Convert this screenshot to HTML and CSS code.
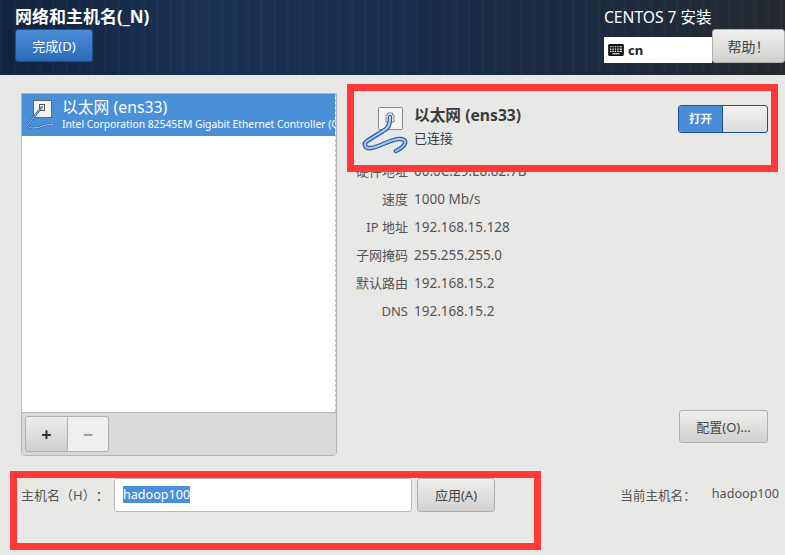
FILE: index.html
```html
<!DOCTYPE html>
<html lang="zh-CN">
<head>
    <meta charset="UTF-8">
    <meta name="viewport" content="width=device-width, initial-scale=1.0">
    <link rel="stylesheet" href="styles.css">
    <title>网络和主机名</title>
</head>
<body>
    <svg class="defs" width="0" height="0">
        <defs>
            <linearGradient id="cable" x1="0" y1="0" x2="0" y2="1">
                <stop offset="0" stop-color="#c4daf4"/>
                <stop offset="1" stop-color="#9dbde6"/>
            </linearGradient>
        </defs>
    </svg>

    <header class="topbar">
        <div class="topbar-left">
            <h1>网络和主机名(_N)</h1>
            <button class="done-btn">完成(D)</button>
        </div>
        <div class="topbar-right">
            <div class="product">CENTOS 7 安装</div>
            <div class="topbar-tools">
                <div class="keyboard">
                    <svg class="kbd-icon" width="16" height="12" viewBox="0 0 17 13">
                        <rect x="0" y="0" width="17" height="13" rx="1.5" fill="#111"/>
                        <path d="M2 3h1.5M4.6 3h1.5M7.2 3h1.5M9.8 3h1.5M12.4 3h2.5M2 5.5h1.5M4.6 5.5h1.5M7.2 5.5h1.5M9.8 5.5h1.5M12.4 5.5h2.5M2 8h1.5M4.6 8h1.5M7.2 8h1.5M9.8 8h1.5M12.4 8h2.5M4.6 10.5h7.8" stroke="#fff" stroke-width="1.2"/>
                    </svg>
                    <span>cn</span>
                </div>
                <button class="btn help-btn">帮助！</button>
            </div>
        </div>
    </header>

    <main class="content">
        <section class="device-panel">
            <div class="device-list">
                <div class="device-row">
                    <svg class="nic-icon" width="34" height="34" viewBox="0 0 34 34">
                        <rect x="7.5" y="2.5" width="18" height="17" fill="#f2f2f0" stroke="#666"/>
                        <rect x="13.5" y="6.5" width="5" height="6" fill="none" stroke="#555"/>
                        <path d="M16 9L3 25C0 29 3 30 8 30C14 30 20 26 26 26C28 26 28 27 25 28" fill="none" stroke="#2f5f9f" stroke-width="2.2" stroke-linecap="round"/>
                        <path d="M16 9L3 25C0 29 3 30 8 30C14 30 20 26 26 26C28 26 28 27 25 28" fill="none" stroke="#a9c8ee" stroke-width="1" stroke-linecap="round"/>
                    </svg>
                    <div class="device-text">
                        <div class="device-name">以太网 (ens33)</div>
                        <div class="device-desc">Intel Corporation 82545EM Gigabit Ethernet Controller (Copper)</div>
                    </div>
                </div>
            </div>
            <div class="device-toolbar">
                <div class="btn-group">
                    <button class="tool-btn">+</button>
                    <button class="tool-btn tool-off">−</button>
                </div>
            </div>
        </section>

        <section class="details">
            <div class="details-head">
                <svg class="nic-large" width="52" height="50" viewBox="0 0 52 50">
                    <rect x="17.5" y="3.5" width="24" height="22" rx="1" fill="#f4f4f2" stroke="#8a8a88"/>
                    <path d="M26.5 9h5v2h1.500v7h-8v-7h1.500z" fill="none" stroke="#888"/>
                    <path d="M29 13C29 20 28 24 22 27L6 37C2 40 4 45 10 44C20 43 30 34 40 35C47 36 45 42 35 47" fill="none" stroke="#2f62ad" stroke-width="4.600" stroke-linecap="round"/>
                    <path d="M29 13C29 20 28 24 22 27L6 37C2 40 4 45 10 44C20 43 30 34 40 35C47 36 45 42 35 47" fill="none" stroke="url(#cable)" stroke-width="2" stroke-linecap="round"/>
                </svg>
                <div class="details-title">
                    <div class="details-name">以太网 (ens33)</div>
                    <div class="details-status">已连接</div>
                </div>
                <div class="switch">
                    <span class="switch-on">打开</span>
                    <span class="switch-knob"></span>
                </div>
            </div>

            <dl class="info">
                <dt>硬件地址</dt><dd>00:0C:29:E8:82:7B</dd>
                <dt>速度</dt><dd>1000 Mb/s</dd>
                <dt>IP 地址</dt><dd>192.168.15.128</dd>
                <dt>子网掩码</dt><dd>255.255.255.0</dd>
                <dt>默认路由</dt><dd>192.168.15.2</dd>
                <dt>DNS</dt><dd>192.168.15.2</dd>
            </dl>

            <div class="config-row">
                <button class="btn config-btn">配置(O)...</button>
            </div>
        </section>

        <section class="hostname">
            <label class="hostname-label" for="hostInput">主机名（H）：</label>
            <div class="hostname-input" id="hostInput"><span class="selected">hadoop100</span></div>
            <button class="btn apply-btn">应用(A)</button>
            <div class="current-host">
                <span class="current-label">当前主机名：</span>
                <span>hadoop100</span>
            </div>
        </section>
    </main>

    <div class="mark mark-top"></div>
    <div class="mark mark-bottom"></div>
</body>
</html>
```

FILE: styles.css
```css
* {
    box-sizing: border-box;
}

body {
    font-family: "Noto Sans", "Noto Sans CJK SC", sans-serif;
    font-size: 13px;
    color: #3a3c3c;
    background-color: #e8e8e7;
    margin: 0;
    width: 785px;
    height: 555px;
    overflow: hidden;
    position: relative;
    text-spacing-trim: space-all;
}

button {
    font-family: inherit;
    margin: 0;
    text-spacing-trim: space-all;
}

.defs {
    position: absolute;
}

/* top bar */
.topbar {
    height: 75px;
    display: flex;
    justify-content: space-between;
    color: #fff;
    background:
        repeating-linear-gradient(90deg, rgba(255, 255, 255, 0.018) 0 3px, rgba(0, 0, 0, 0.03) 3px 7px, rgba(255, 255, 255, 0) 7px 13px),
        linear-gradient(90deg, #10233f 0%, #1a3253 25%, #182e4e 50%, #1d2b40 75%, #262a30 100%);
}

.topbar-left {
    padding: 7px 0 0 15px;
}

.topbar-left h1 {
    margin: 0 0 2px;
    font-size: 17px;
    line-height: 20px;
    font-weight: 700;
}

.done-btn {
    display: block;
    width: 78px;
    height: 33px;
    padding: 0;
    color: #fff;
    font-size: 13px;
    border: 1px solid #1d4f8c;
    border-radius: 3px;
    background: linear-gradient(#4a8cd8, #2a6cb8);
}

.topbar-right {
    width: 181px;
    padding-top: 7px;
}

.product {
    font-size: 15.6px;
    line-height: 20px;
    margin-bottom: 2px;
}

.topbar-tools {
    display: flex;
    align-items: flex-start;
}

.keyboard {
    width: 108px;
    height: 26px;
    margin-top: 8px;
    padding-left: 4px;
    display: flex;
    align-items: center;
    gap: 4px;
    color: #222;
    font-size: 13px;
    font-weight: 700;
    background-color: #fff;
}

.kbd-icon {
    flex: none;
}

.btn {
    height: 34px;
    padding: 0;
    color: #444;
    font-size: 13px;
    border: 1px solid #b0b0ae;
    border-radius: 3px;
    background: linear-gradient(#efefed, #d0d0ce);
}

.help-btn {
    width: 73px;
    font-size: 14px;
}

/* main area */
.content {
    display: grid;
    grid-template-columns: 316px 1fr;
    grid-template-rows: 363px auto;
    column-gap: 19px;
    padding: 18px 0 0 21px;
}

.device-panel {
    display: flex;
    flex-direction: column;
    border: 1px solid #b6b6b4;
    border-radius: 0 0 4px 4px;
    background-color: #fff;
    overflow: hidden;
}

.device-list {
    flex: 1;
    border-right: 1px dashed #c4c4c4;
}

.device-row {
    height: 42px;
    display: flex;
    align-items: center;
    padding-left: 4px;
    color: #fff;
    background-color: #4a90d9;
    overflow: hidden;
}

.nic-icon {
    flex: none;
    margin-right: 2px;
}

.device-text {
    min-width: 0;
}

.device-name {
    font-size: 15.8px;
    line-height: 19px;
    white-space: nowrap;
}

.device-desc {
    font-size: 10.3px;
    line-height: 15px;
    white-space: nowrap;
}

.device-toolbar {
    height: 43px;
    padding: 3px;
    background-color: #d9d9d7;
    border-top: 1px solid #b6b6b4;
}

.btn-group {
    display: flex;
    width: 84px;
    height: 36px;
}

.tool-btn {
    width: 43px;
    padding: 0;
    font-size: 18px;
    font-weight: 700;
    color: #2e3436;
    border: 1px solid #b0b0ae;
    border-radius: 3px 0 0 3px;
    background: linear-gradient(#ededeb, #cfcfcd);
}

.tool-off {
    width: 41px;
    color: #999;
    border-left: 0;
    border-radius: 0 3px 3px 0;
    background: #efeff0;
}

.details {
    display: flex;
    flex-direction: column;
    padding-right: 17px;
}

.details-head {
    height: 65px;
    padding-left: 12px;
    margin-top: -1px;
    display: flex;
    align-items: flex-start;
}

.nic-large {
    flex: none;
    margin: 12px 1px 0 -7px;
}

.details-title {
    flex: 1;
    padding-top: 12px;
}

.details-name {
    font-size: 15.7px;
    font-weight: 700;
    line-height: 22px;
}

.details-status {
    font-size: 13px;
    line-height: 24px;
}

.switch {
    width: 90px;
    height: 28px;
    margin-top: 13px;
    display: flex;
    border: 1px solid #1d4f8c;
    border-radius: 3px;
    overflow: hidden;
    background: linear-gradient(#f2f2f0, #dcdcda);
}

.switch-on {
    width: 44px;
    color: #fff;
    font-size: 11.5px;
    font-weight: 700;
    line-height: 26px;
    text-align: center;
    background-color: #4a8cd8;
    border-right: 1px solid #1d4f8c;
}

.switch-knob {
    flex: 1;
}

.info {
    margin: 0;
    display: grid;
    grid-template-columns: 52px 1fr;
    column-gap: 6px;
    grid-auto-rows: 28px;
    line-height: 28px;
    color: #555;
}

.info dt {
    text-align: right;
    white-space: nowrap;
}

.info dd {
    margin: 0;
    font-size: 13.5px;
}

.config-row {
    display: flex;
    justify-content: flex-end;
    margin-top: 85px;
}

.config-btn {
    width: 89px;
    height: 33px;
}

/* hostname row */
.hostname {
    grid-column: 1 / 3;
    margin-top: 22px;
    display: flex;
    align-items: center;
    height: 33px;
    color: #555;
}

.hostname-label {
    width: 93px;
    white-space: nowrap;
}

.hostname-input {
    width: 298px;
    height: 34px;
    padding: 7px 8px 8px;
    line-height: 17px;
    font-size: 12.6px;
    background-color: #fff;
    border: 1px solid #b8b8b6;
    border-radius: 3px;
}

.selected {
    display: inline-block;
    color: #fff;
    background-color: #4a90d9;
}

.apply-btn {
    width: 78px;
    margin-left: 5px;
}

.current-host {
    margin-left: auto;
    display: flex;
    gap: 16px;
    padding-right: 6px;
    font-size: 12.6px;
}

/* red annotation frames drawn over the screenshot */
.mark {
    position: absolute;
    border: 7px solid #ff3838;
}

.mark-top {
    left: 347px;
    top: 84px;
    width: 431px;
    height: 88px;
}

.mark-bottom {
    left: 10px;
    top: 471px;
    width: 531px;
    height: 79px;
}
```
